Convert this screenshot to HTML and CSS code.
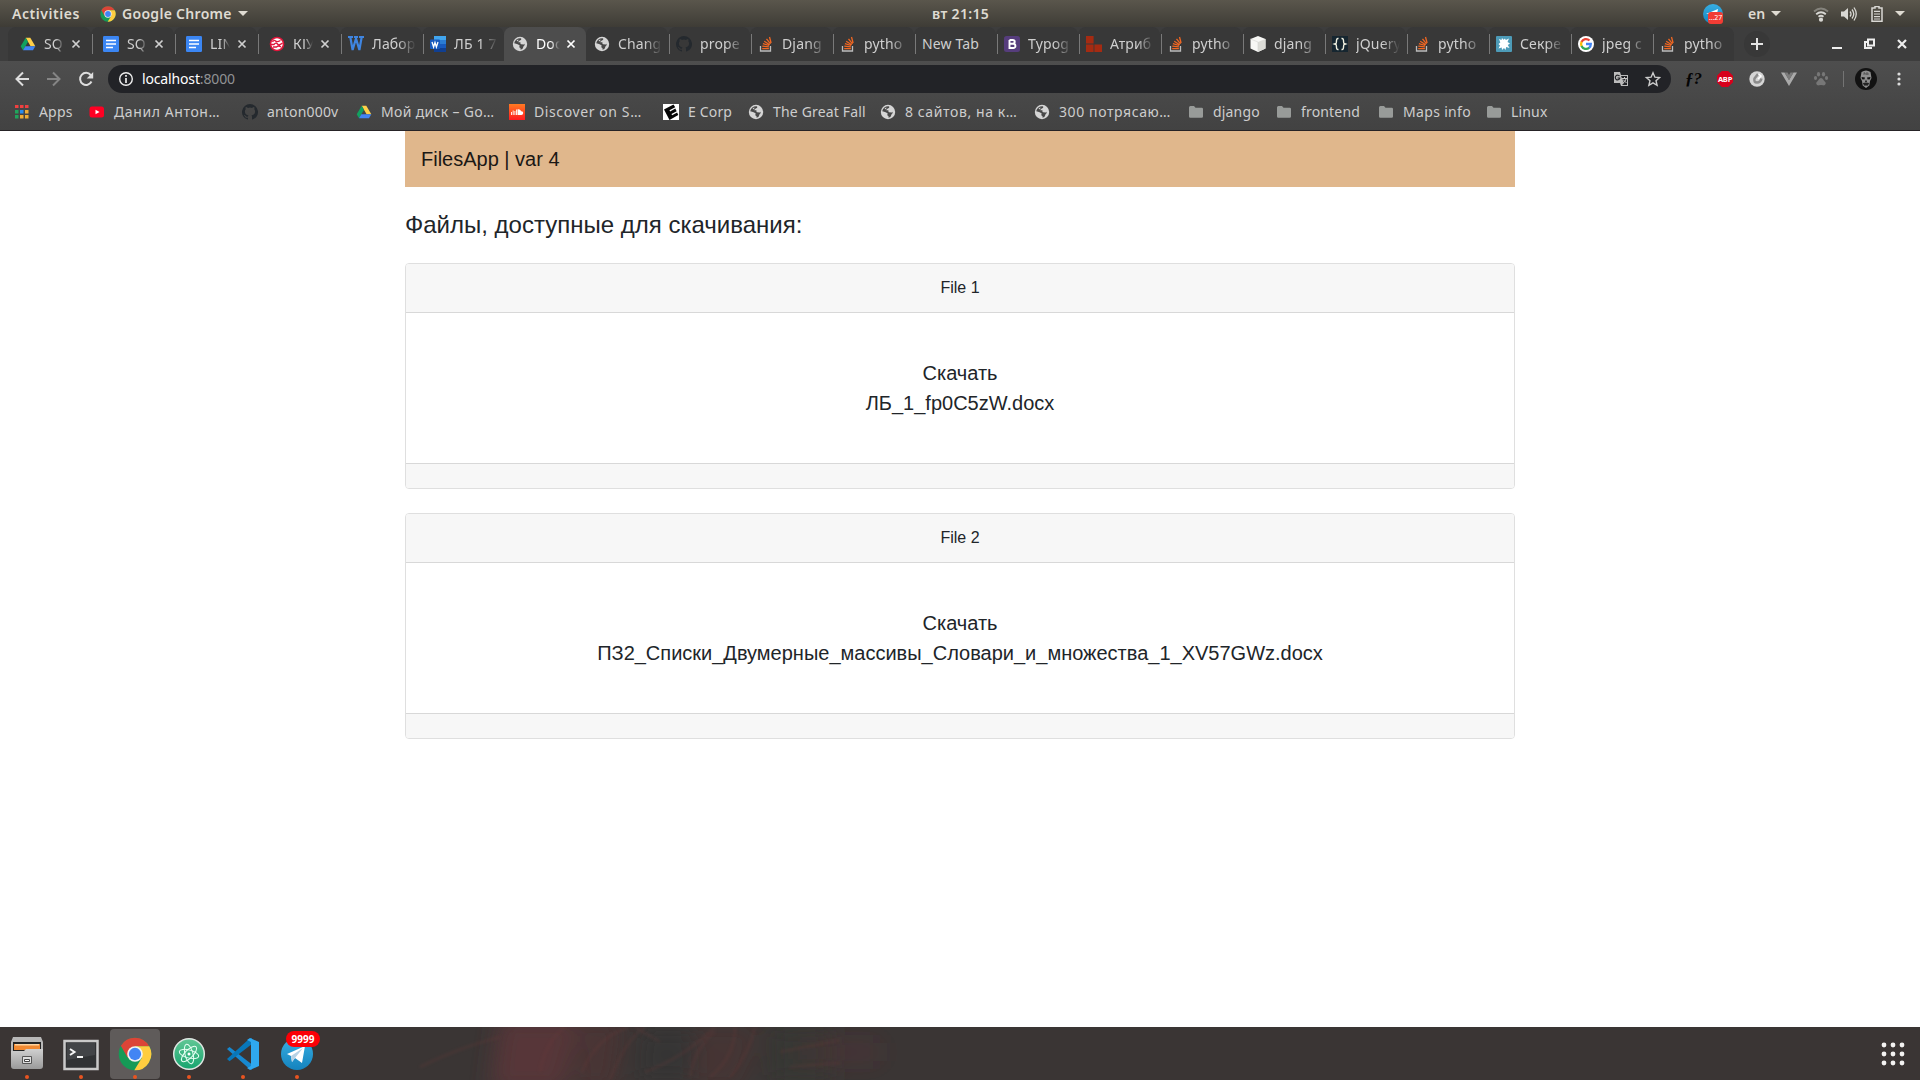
FILE: index.html
```
<!DOCTYPE html>
<html lang="ru">
<head>
<meta charset="utf-8">
<title>FilesApp</title>
<link rel="stylesheet" href="styles.css">
</head>
<body>
<svg class="defs" width="0" height="0" aria-hidden="true">
<defs>
<linearGradient id="metal" x1="0" y1="0" x2="0" y2="1"><stop offset="0" stop-color="#d0d0d0"/><stop offset="1" stop-color="#9a9a9a"/></linearGradient>
<linearGradient id="atomg" x1="0" y1="0" x2="0" y2="1"><stop offset="0" stop-color="#62c795"/><stop offset="1" stop-color="#16a56f"/></linearGradient>
<linearGradient id="tgg" x1="0" y1="0" x2="0" y2="1"><stop offset="0" stop-color="#37aee2"/><stop offset="1" stop-color="#1583be"/></linearGradient>
<linearGradient id="scg" x1="0" y1="0" x2="0" y2="1"><stop offset="0" stop-color="#ff7a22"/><stop offset="1" stop-color="#ff1a20"/></linearGradient>
<filter id="soft" x="-30%" y="-30%" width="160%" height="160%"><feGaussianBlur stdDeviation="11"/></filter>
<filter id="soft1"><feGaussianBlur stdDeviation="1.6"/></filter>
<symbol id="drive" viewBox="0 0 16 16"><path d="M5.7 1.8h4.6l5 8.500h-4.700z" fill="#ffcf48"/><path d="M5.700 1.800 8 5.800 3 14.300.7 10.300z" fill="#11a05f"/><path d="M5.300 10.300h10L13 14.300H3z" fill="#4285f4"/></symbol>
<symbol id="docs" viewBox="0 0 16 16"><rect width="16" height="16" rx="1.200" fill="#3b86f3"/><path d="M3 4.500h10M3 8h10M3 11.500h7" stroke="#fff" stroke-width="1.700"/></symbol>
<symbol id="kiu" viewBox="0 0 16 16"><circle cx="8" cy="8" r="6.500" fill="#fff" stroke="#e0153a" stroke-width="1.600"/><path d="M3.500 6q1.500-2.500 3-1t5-.5M2 8.500h3q2-2.500 3.500-.5t5-1M4 11h3.500q2-2 4.500 0" fill="none" stroke="#e0153a" stroke-width="1.300"/></symbol>
<symbol id="wblue" viewBox="0 0 16 16"><path d="M0 1h5M6 1h4M11 1h5M2.300 1 4.600 14 8 2.500 11.400 14 13.700 1" fill="none" stroke="#3f85e0" stroke-width="2.200"/></symbol>
<symbol id="word" viewBox="0 0 16 16"><path d="M4 0h12v4H4z" fill="#41a5ee"/><path d="M4 4h12v4H4z" fill="#2b7cd3"/><path d="M4 8h12v4H4z" fill="#185abd"/><path d="M4 12h12v4H4z" fill="#103f91"/><rect y="3.500" width="10" height="9.500" rx="1" fill="#185abd"/><path d="m2 6 1.600 5L5 6.500 6.400 11 8 6" fill="none" stroke="#fff" stroke-width="1.300"/></symbol>
<symbol id="globe" viewBox="0 0 16 16"><circle cx="8" cy="8" r="7.200" fill="#d5d5d5"/><path d="M8.500 2.200c1 .2 1 1.300.3 1.800L7 5l-.8 1.300H8l1.500 1.200H12c1 .8 1 2-.3 2.500l-.9 2.200c-.6 1-1.500 1.300-2.300 1.600.4-1.800-.3-2-1.200-2.600l.3-2L5 8 2.200 7.200A6 6 0 0 1 8.500 2.200z" fill="#484848"/><path d="M8.200 7.300 10.500 6l2.500.5-1 2-3-.2z" fill="#d5d5d5"/><path d="m4.500 4.300 2-.8-.5 2z" fill="#d5d5d5"/></symbol>
<symbol id="github" viewBox="0 0 16 16"><path fill="#24292e" d="M8 0a8 8 0 0 0-2.500 15.600c.4.1.5-.2.500-.4v-1.500c-2 .4-2.700-.5-2.900-1-.1-.3-.6-1-.9-1.200-.3-.2-.8-.6 0-.6.700 0 1.200.6 1.300.9.800 1.300 2 .9 2.500.7.100-.6.300-1 .6-1.200-1.900-.2-3.700-.9-3.700-4 0-.9.300-1.600.8-2.100-.1-.2-.4-1 .1-2.100 0 0 .7-.2 2.200.8a7.500 7.500 0 0 1 4 0c1.500-1 2.200-.8 2.200-.8.4 1.100.2 1.900.1 2.100.5.600.8 1.300.8 2.100 0 3.100-1.900 3.800-3.700 4 .3.300.6.800.6 1.500v2.400c0 .2.100.5.500.4A8 8 0 0 0 8 0z"/></symbol>
<symbol id="so" viewBox="0 0 16 16"><path d="M2.500 10v5h10v-5" fill="none" stroke="#bcbcbc" stroke-width="1.300"/><path d="M4.200 12.600h6.700M4.300 10.200l6.600.7M4.900 7.600l6.300 1.900M6.200 5.200l5.500 3.500M8.500 2.800l4 5.100M11.500 1l1.600 6" stroke="#f26722" stroke-width="1.300"/></symbol>
<symbol id="boot" viewBox="0 0 16 16"><rect width="16" height="16" rx="2.500" fill="#563d7c"/><path d="M5.500 4h3.200c2.700 0 2.700 3.600 0 3.800H5.500V4v8h3.600c3.200 0 3-4.200 0-4.200" fill="none" stroke="#fff" stroke-width="1.900"/></symbol>
<symbol id="bricks" viewBox="0 0 16 16"><path d="M0 0h7.600v7.600H0zM0 8.400h7.600V16H0zM8.400 8.400H16V16H8.400z" fill="#a52b12"/></symbol>
<symbol id="cube" viewBox="0 0 16 16"><path d="m8 0 7.500 3v9.500L8 16 .5 12.500V3z" fill="#f7f7f5"/><path d="m8 6 7.500-3v9.500L8 16z" fill="#dcdcd7"/><path d="m.5 3 7.500 3v10" fill="none" stroke="#d5d5d1" stroke-width=".6"/></symbol>
<symbol id="braces" viewBox="0 0 16 16"><path fill="#162630" d="M0 0h16v16H0z"/><path d="M6.500 2.500C3.500 2 5 6.500 4 7.500l-1.500.5 1.500.5c1 1-.5 5.500 2.500 5M9.500 2.500c3-.5 1.500 4 2.500 5l1.500.5-1.500.5c-1 1 .5 5.500-2.500 5" fill="none" stroke="#f0f0e0" stroke-width="1.400"/></symbol>
<symbol id="virus" viewBox="0 0 16 16"><rect width="16" height="16" rx="1" fill="#4d9bb8"/><path d="m3 3 2.500 1L6 2l1.500 1.800L9 2.500l.8 1.500L13 2.500 11.500 6l2.500 1.500L11.800 9l1.700 3-3.300-1-.7 3L8 12l-2 2-.3-2.500L2.500 12.500 4 9.500 2.500 8 4.300 6.500z" fill="#fff"/></symbol>
<symbol id="google" viewBox="0 0 16 16"><circle cx="8" cy="8" r="8" fill="#fff"/><g fill="none" stroke-width="2.300"><path d="M11.500 4.500A5 5 0 0 0 3.500 6" stroke="#ea4335"/><path d="M3.600 5.800a5 5 0 0 0 0 4.400" stroke="#fbbc05"/><path d="M3.500 10a5 5 0 0 0 7.800 1.700" stroke="#34a853"/><path d="M8 8h4.800q0 2.500-1.700 3.900" stroke="#4285f4"/></g></symbol>
<symbol id="chrome" viewBox="0 0 48 48"><circle cx="24" cy="24" r="23" fill="#159a56"/><path d="M4 12.500A23 23 0 0 1 44 13H24L13.500 29z" fill="#db4437"/><path d="M24 13h20.200A23 23 0 0 1 23 47l11-18z" fill="#ffcd40"/><circle cx="24" cy="24" r="11" fill="#f2f2f2"/><circle cx="24" cy="24" r="8.700" fill="#4285f4"/></symbol>
<symbol id="yt" viewBox="0 0 16 16"><rect x=".5" y="2.500" width="14.500" height="11" rx="2.500" fill="#ff0023"/><path d="m6.500 5.800 4 2.200-4 2.200z" fill="#fff"/></symbol>
<symbol id="sc" viewBox="0 0 16 16"><path fill="url(#scg)" d="M0 0h16v16H0z"/><path d="M2.500 8v3M4.200 6.500V11M5.900 7v4M7.500 5.500V11" stroke="#fff" stroke-width=".9"/><path d="M8.500 5.300c2-.6 3.300.6 3.500 2 3-.5 2.800 3.700.3 3.700H8.500z" fill="#fff"/></symbol>
<symbol id="ecorp" viewBox="0 0 16 16"><path fill="#fff" d="M0 0h16v16H0z"/><path d="M1 5.500 10.500.5l1.700 2.700-5.700 3 .6 1.200 5.200-2.800 1.400 2.600-5.200 2.800.6 1.200 5-2.700 1.200 2.500L6.500 16z" fill="#050505"/></symbol>
<symbol id="folder" viewBox="0 0 16 16"><path d="M1 3.500Q1 2 2.400 2H6l1.500 1.700h6.200Q15 3.700 15 5v7.500q0 1.300-1.300 1.300H2.300Q1 13.800 1 12.500z" fill="#989b99"/></symbol>
<symbol id="x" viewBox="0 0 10 10"><path d="m1.500 1.500 7 7M8.500 1.500l-7 7" stroke="currentColor" stroke-width="1.700"/></symbol>
</defs>
</svg>

<header class="topbar">
<span class="activities">Activities</span>
<span class="appmenu"><svg width="16" height="16"><use href="#chrome"/></svg><span>Google Chrome</span><i class="caret"></i></span>
<span class="clock">вт 21:15</span>
<span class="tray">
<span class="tg"><svg width="20" height="20" viewBox="0 0 20 20"><circle cx="10" cy="10" r="10" fill="url(#tgg)"/><path d="m3 10 12-5-1 5z" fill="#fff"/></svg><b>...27</b></span>
<span class="lang">en</span><i class="caret"></i>
<svg class="wifi" width="16" height="16" viewBox="0 0 16 16" fill="none" stroke="#d9d8d4" stroke-width="1.800"><path d="M1 5.500q7-6 14 0" stroke="#85837c"/><path d="M3.200 8.200q4.800-4 9.600 0M5.500 10.800q2.500-2 5 0"/><circle cx="8" cy="13.700" r="1.200" fill="#d9d8d4"/></svg>
<svg class="vol" width="16" height="16" viewBox="0 0 16 16"><path d="M0 5.500h3L7 2v12l-4-3.500H0z" fill="#d9d8d4"/><path d="M9 5.500q2 2.500 0 5M11 3.500q3.500 4.500 0 9M13 1.500q4.500 6.500 0 13" fill="none" stroke="#d9d8d4" stroke-width="1.300"/></svg>
<svg class="bat" width="12" height="16" viewBox="0 0 12 16"><path d="M4 .5h4V2h3v13.200H1V2h3z" fill="none" stroke="#d9d8d4" stroke-width="1.500"/><path d="M3 5.300h6M3 8h6M3 10.600h6M3 13h6" stroke="#d9d8d4" stroke-width="1.200"/></svg>
<i class="caret"></i>
</span>
</header>

<nav class="tabs">
<div class="tab wide first"><svg><use href="#drive"/></svg><span>SQ</span><svg class="close"><use href="#x"/></svg></div>
<div class="tab wide"><svg><use href="#docs"/></svg><span>SQ</span><svg class="close"><use href="#x"/></svg></div>
<div class="tab wide"><svg><use href="#docs"/></svg><span>LIN</span><svg class="close"><use href="#x"/></svg></div>
<div class="tab wide"><svg><use href="#kiu"/></svg><span>КІУ</span><svg class="close"><use href="#x"/></svg></div>
<div class="tab"><svg><use href="#wblue"/></svg><span>Лабор</span></div>
<div class="tab"><svg><use href="#word"/></svg><span>ЛБ 1 7</span></div>
<div class="tab active"><svg><use href="#globe"/></svg><span>Doc</span><svg class="close"><use href="#x"/></svg></div>
<div class="tab after"><svg><use href="#globe"/></svg><span>Chang</span></div>
<div class="tab"><svg><use href="#github"/></svg><span>prope</span></div>
<div class="tab"><svg><use href="#so"/></svg><span>Djang</span></div>
<div class="tab"><svg><use href="#so"/></svg><span>pytho</span></div>
<div class="tab plain"><span>New Tab</span></div>
<div class="tab"><svg><use href="#boot"/></svg><span>Typog</span></div>
<div class="tab"><svg><use href="#bricks"/></svg><span>Атриб</span></div>
<div class="tab"><svg><use href="#so"/></svg><span>pytho</span></div>
<div class="tab"><svg><use href="#cube"/></svg><span>djang</span></div>
<div class="tab"><svg><use href="#braces"/></svg><span>jQuery</span></div>
<div class="tab"><svg><use href="#so"/></svg><span>pytho</span></div>
<div class="tab"><svg><use href="#virus"/></svg><span>Секре</span></div>
<div class="tab"><svg><use href="#google"/></svg><span>jpeg c</span></div>
<div class="tab"><svg><use href="#so"/></svg><span>pytho</span></div>
<div class="newtab"><svg width="12" height="12" viewBox="0 0 12 12"><path d="M6 0v12M0 6h12" stroke="#e3e3e3" stroke-width="2"/></svg></div>
<svg class="winctl" width="76" height="14" viewBox="0 0 76 14" fill="none" stroke="#eee" stroke-width="2"><path d="M0 11h10"/><path d="M36 2.500h6v6h-6zM35 5h-2v6h6v-1"/><path d="m66 3 8 8M74 3l-8 8" stroke-width="2.200"/></svg>
</nav>

<section class="toolbar">
<div class="navrow">
<svg class="navicons" width="80" height="16" viewBox="0 0 80 16" fill="none" stroke-width="2"><path d="M14 8H2M8 1.500 1.500 8 8 14.500" stroke="#dedede"/><path d="M32 8h12M38 1.500 44.500 8l-6.500 6.500" stroke="#858585"/><path d="M76.500 10.500a6 6 0 1 1-.8-6.500" stroke="#dedede"/><path d="M78.200 1v6.500h-6.500z" fill="#dedede"/></svg>
<div class="omnibox">
<svg width="16" height="16" viewBox="0 0 16 16"><circle cx="8" cy="8" r="6.300" fill="none" stroke="#eee" stroke-width="1.400"/><path d="M8 7v5M8 4v1.700" stroke="#eee" stroke-width="1.700"/></svg>
<span class="url">localhost<em>:8000</em></span>
<svg class="omr" width="48" height="16" viewBox="0 0 48 16"><path d="M1 1h6l1 3h7v11H8l-1-3H1z" fill="#bcbcbc"/><path d="M8 5h6v9H9l2-2z" fill="#222327"/><path d="M9 7.500h5M11.500 6v1.500M9.500 12q3-1 3.500-4M10 8.500l3.500 3.500" stroke="#c5c5c5"/><path d="M6.500 5.200A2.300 2.300 0 1 0 6.700 7.500V7H4.500" fill="none" stroke="#222327" stroke-width="1.200"/><path d="m40 1.800 1.900 4.400 4.700.4-3.600 3.100 1.100 4.600L40 11.800l-4.100 2.500L37 9.700l-3.600-3.100 4.700-.4z" fill="none" stroke="#ccc" stroke-width="1.400"/></svg>
</div>
<div class="exts">
<span class="fq">ƒ?</span>
<span class="abp"><b>ABP</b></span>
<svg width="16" height="16" viewBox="0 0 16 16"><circle cx="8" cy="8" r="7.700" fill="#d5d5d5"/><path d="M9 3 5.500 7.500q-1 4 2.500 4 3.500 0 4.500-4" fill="none" stroke="#8c8c8c" stroke-width="2.500"/><path d="m9.500 3 2.500 2-3 3" fill="none" stroke="#fff" stroke-width="1.500"/></svg>
<svg width="16" height="16" viewBox="0 0 16 16"><path d="M0 1.500h3.500L8 9l4.500-7.500H16L8 15z" fill="#aaa"/><path d="M3.500 1.500h3L8 4l1.500-2.500h3L8 9.300z" fill="#7b7b7b"/></svg>
<svg width="16" height="16" viewBox="0 0 16 16" fill="#777"><ellipse cx="5.500" cy="3.200" rx="1.600" ry="2.300"/><ellipse cx="10.500" cy="3.200" rx="1.600" ry="2.300"/><ellipse cx="2.500" cy="7" rx="1.600" ry="2"/><ellipse cx="13.500" cy="7" rx="1.600" ry="2"/><path d="M8 7c2 0 2.500 2.500 4 3.800 1.800 1.700 0 4.200-2 3.500q-2-.7-4 0c-2 .7-3.800-1.800-2-3.500C5.500 9.500 6 7 8 7z"/></svg>
</div>
<i class="vsep"></i>
<svg class="avatar" width="22" height="22" viewBox="0 0 22 22"><circle cx="11" cy="11" r="11" fill="#121212"/><path d="M6.500 4q4.500-3 9 0l1 6-1.500 3-.7 4.500L11 20l-3.300-2.500L7 13l-1.500-3z" fill="#8f8f8f"/><path d="m6.500 9 3.500.6-.6 2-2.400-.3zM15.500 9l-3.500.6.6 2 2.400-.3zM11 11.500l1 2.500h-2zM8 15l3-.6 3 .6-1 2.500H9z" fill="#151515"/><path d="M9 16h4M8 6h6M9 4l1 2M12 4v3" stroke="#444" stroke-width=".7"/></svg>
<svg class="kebab" width="4" height="14" viewBox="0 0 4 14" fill="#dcdcdc"><circle cx="2" cy="2" r="1.600"/><circle cx="2" cy="7" r="1.600"/><circle cx="2" cy="12" r="1.600"/></svg>
</div>
<div class="bookmarks">
<a><svg viewBox="0 0 16 16"><path d="M1 1h3.500v3H1zM6 1h3.500v3H6zM11 1h3.500v3H11z" fill="#f04040"/><path d="M1 6h3.500v3.500H1zM1 11h3.500v3.500H1z" fill="#20a45c"/><path d="M6 6h3.500v3.500H6z" fill="#278df0"/><path d="M11 6h3.500v3.500H11zM6 11h3.500v3.500H6zM11 11h3.500v3.500H11z" fill="#f0ad35"/></svg><span>Apps</span></a>
<a class="long"><svg><use href="#yt"/></svg><span>Данил Антон…</span></a>
<a><svg><use href="#github"/></svg><span>anton000v</span></a>
<a class="mid"><svg><use href="#drive"/></svg><span>Мой диск – Go…</span></a>
<a class="long"><svg><use href="#sc"/></svg><span>Discover on S…</span></a>
<a><svg><use href="#ecorp"/></svg><span>E Corp</span></a>
<a><svg><use href="#globe"/></svg><span>The Great Fall</span></a>
<a class="long"><svg><use href="#globe"/></svg><span>8 сайтов, на к…</span></a>
<a class="long"><svg><use href="#globe"/></svg><span>300 потрясаю…</span></a>
<a><svg><use href="#folder"/></svg><span>django</span></a>
<a><svg><use href="#folder"/></svg><span>frontend</span></a>
<a class="mid"><svg><use href="#folder"/></svg><span>Maps info</span></a>
<a><svg><use href="#folder"/></svg><span>Linux</span></a>
</div>
</section>

<main class="page">
<div class="container">
<div class="navbar">FilesApp | var 4</div>
<h1>Файлы, доступные для скачивания:</h1>
<article class="card">
<div class="card-header">File 1</div>
<div class="card-body"><p>Скачать</p><p>ЛБ_1_fp0C5zW.docx</p></div>
<div class="card-footer"></div>
</article>
<article class="card">
<div class="card-header">File 2</div>
<div class="card-body"><p>Скачать</p><p>ПЗ2_Списки_Двумерные_массивы_Словари_и_множества_1_XV57GWz.docx</p></div>
<div class="card-footer"></div>
</article>
</div>
</main>

<footer class="dock">
<svg class="wall" width="1920" height="53" viewBox="0 0 1920 53"><g filter="url(#soft)"><path d="M500-10h80l-15 75h-75z" fill="#5c3538" opacity=".85"/><path d="M580-10h45l-10 75h-40z" fill="#4d3536" opacity=".8"/><path d="M640 0h55v55h-60z" fill="#343532" opacity=".8"/><path d="M700 0h60l-20 60h-50z" fill="#5a3535" opacity=".35"/><path d="M770 0h60v55h-60z" fill="#343532" opacity=".6"/><path d="M800 15h80v20h-80z" fill="#6b3539" opacity=".25"/></g><g fill="none" stroke="#6d3a39" opacity=".32" filter="url(#soft1)" stroke-width="2"><path d="M420 40q40-20 80-30M540 45q5-30 25-45M582 45q15-35 45-44M610 53q15-40 35-53M645 45q40-15 70-45M690 50q5-30 25-45M710 50q25-20 25-50M730 50q20-25 25-50M635 0l25 15M780 25l60-12M790 40l50-4"/></g></svg>
<div class="launcher"><svg viewBox="0 0 50 50"><path d="M11 8h28l2 5v9H9v-9z" fill="#b8b8b8"/><path d="M11 13h28v9H11z" fill="#242424"/><path d="M12 15h26v6H12z" fill="#f28a32"/><path d="M13 15h24v1.500H13z" fill="#ffd4a0"/><path d="M9 22h13l2-2h17v17q0 3-3 3H12q-3 0-3-3z" fill="url(#metal)"/><path d="M20.500 27.500h9v7h-9z" fill="#ddd" stroke="#555"/><path d="M22.500 30.500h5v2h-5z" fill="#fff" stroke="#444"/></svg><i></i></div>
<div class="launcher"><svg viewBox="0 0 50 50"><path d="M8.500 12h33v28h-33z" fill="#303234" stroke="#c9c9c9" stroke-width="2.500"/><path d="M11 14h28v12L11 31z" fill="#424447"/><path d="m14 20 4.500 3-4.500 3M21 28h6" fill="none" stroke="#f5f5f5" stroke-width="2"/></svg><i></i></div>
<div class="launcher on"><svg viewBox="0 0 50 50"><use href="#chrome" x="8" y="8" width="34" height="34"/></svg><i></i></div>
<div class="launcher"><svg viewBox="0 0 50 50"><circle cx="25" cy="25" r="15.300" fill="url(#atomg)" stroke="#dfe5e2" stroke-width="1.500"/><g fill="none" stroke="#e9fff4" stroke-width="1"><ellipse cx="25" cy="25" rx="10" ry="4" transform="rotate(15 25 25)"/><ellipse cx="25" cy="25" rx="10" ry="4" transform="rotate(75 25 25)"/><ellipse cx="25" cy="25" rx="10" ry="4" transform="rotate(135 25 25)"/></g><circle cx="25" cy="25" r="1.500" fill="#fff"/></svg><i></i></div>
<div class="launcher"><svg viewBox="0 0 50 50"><path d="m9 20 2.500-2L34 35.500v5L31.500 40z" fill="#1789d1"/><path d="m9 30 2.500 2.300L34 15v-6l-3 1z" fill="#0877b9"/><path d="m32 9 9 4v24l-9 4-3-2 4-2V13l-4-2z" fill="#2fa8ef"/></svg><i></i></div>
<div class="launcher"><svg viewBox="0 0 50 50"><circle cx="25" cy="25" r="16" fill="url(#tgg)"/><path d="m15 25 18-8-3 17-7-5-3 4-1-6z" fill="#fff"/><path d="m19 27 12-8-8 10-3 4z" fill="#b7d2e5"/></svg><b>9999</b><i></i></div>
<svg class="grid" width="24" height="24" viewBox="0 0 24 24" fill="#f3f3f2"><circle cx="3" cy="3" r="2.400"/><circle cx="12" cy="3" r="2.400"/><circle cx="21" cy="3" r="2.400"/><circle cx="3" cy="12" r="2.400"/><circle cx="12" cy="12" r="2.400"/><circle cx="21" cy="12" r="2.400"/><circle cx="3" cy="21" r="2.400"/><circle cx="12" cy="21" r="2.400"/><circle cx="21" cy="21" r="2.400"/></svg>
</footer>
</body>
</html>
```
FILE: styles.css
```
* { box-sizing: border-box; }
body { margin: 0; width: 1920px; height: 1080px; overflow: hidden; display: flex; flex-direction: column; background: #fff; font-family: "Noto Sans", "Open Sans", sans-serif; }
svg { display: block; flex: none; }
.defs { position: absolute; }

.topbar { height: 27px; flex: none; display: grid; grid-template-columns: 88px 832px 714px 1fr; align-items: center; padding-left: 12px; background: linear-gradient(#5a564c, #3e3c36); color: #dfdbd2; font-size: 14px; font-weight: 600; line-height: 26px; white-space: nowrap; }
.appmenu { display: flex; align-items: center; gap: 6px; }
.activities { letter-spacing: .55px; }
.appmenu span { width: 110px; letter-spacing: .3px; }
.clock { letter-spacing: .35px; }
.caret { flex: none; border: 5px solid transparent; border-top-color: #dfdbd2; border-bottom: 0; }
.tray { display: flex; align-items: center; padding-left: 57px; }
.tg { position: relative; width: 20px; height: 20px; margin-right: 25px; }
.tg b { position: absolute; left: 5px; top: 8px; width: 15px; height: 12px; border-radius: 3px; background: #f23c34; color: #fff; font-size: 7px; font-weight: 400; line-height: 12px; text-align: center; }
.lang { width: 23px; }
.wifi { margin-left: 32px; }
.vol { margin-left: 12px; }
.bat { margin-left: 14px; margin-right: 12px; }

.tabs { height: 34px; flex: none; display: flex; align-items: stretch; padding-left: 8px; background: #3d3d3d; color: #cfcfcf; }
.tab { position: relative; width: 82px; flex: none; display: flex; align-items: center; gap: 8px; padding-left: 8px; background: #383838; border-radius: 8px 8px 0 0; }
.tab::before { content: ""; position: absolute; left: 1px; top: 7px; width: 1px; height: 20px; background: #797979; }
.tab.first::before, .tab.active::before, .tab.after::before { display: none; }
.tab svg { width: 16px; height: 16px; }
.tab span { width: 44px; overflow: hidden; white-space: nowrap; font-size: 14px; line-height: 24px; letter-spacing: .15px; -webkit-mask-image: linear-gradient(90deg, #000 60%, transparent); mask-image: linear-gradient(90deg, #000 60%, transparent); }
.tab.wide { width: 83px; padding-left: 12px; }
.tab.wide span { width: 20px; }
.tab svg.close { width: 10px; height: 10px; margin-left: -1px; }
.tab.active { background: #4d4d4d; color: #fff; }
.tab.active span { width: 24px; }
.tab.active svg.close { margin-left: -2px; }
.tab.plain span { width: 66px; -webkit-mask-image: none; mask-image: none; }
.newtab { width: 26px; height: 26px; margin: 4px 0 0 10px; border-radius: 50%; background: #383838; display: flex; align-items: center; justify-content: center; }
.winctl { margin: 10px 12px 0 auto; }

.toolbar { height: 70px; flex: none; background: linear-gradient(#4e4e4e, #424242); border-bottom: 1px solid #262326; padding-top: 4px; }
.navrow { height: 28px; display: flex; align-items: center; padding-left: 15px; }
.omnibox { width: 1563px; height: 28px; margin-left: 13px; border-radius: 14px; background: #222327; display: flex; align-items: center; padding: 0 10px; gap: 8px; }
.url { color: #fff; font-size: 14px; letter-spacing: -.15px; line-height: 24px; }
.url em { font-style: normal; color: #909294; }
.omr { margin-left: auto; }
.exts { display: flex; align-items: center; gap: 16px; margin-left: 14px; }
.fq { width: 16px; font: italic bold 17px/20px "Liberation Serif", serif; color: #050505; white-space: nowrap; }
.abp { width: 16px; height: 16px; background: #d7001b; clip-path: polygon(30% 0, 70% 0, 100% 30%, 100% 70%, 70% 100%, 30% 100%, 0 70%, 0 30%); }
.abp b { display: block; font: bold 7.5px/16px "Noto Sans", sans-serif; letter-spacing: -.2px; color: #fff; text-align: center; }
.vsep { width: 1px; height: 16px; background: #747474; margin-left: 14px; }
.avatar { margin-left: 11px; }
.kebab { margin-left: 20px; }
.bookmarks { height: 37px; display: grid; grid-template-columns: 75px 153px 114px 153px 154px 85px 132px 154px 154px 88px 102px 108px 90px; align-items: center; padding-left: 14px; color: #cdcdcd; font-size: 14px; line-height: 24px; letter-spacing: .17px; }
.bookmarks a { display: flex; align-items: center; gap: 9px; white-space: nowrap; }
.bookmarks .mid { letter-spacing: .33px; }
.bookmarks .long { letter-spacing: .6px; }
.bookmarks svg { width: 16px; height: 16px; }

.page { height: 896px; flex: none; font-family: "Liberation Sans", Arial, sans-serif; color: #212529; }
.container { width: 1110px; margin: 0 auto; }
.navbar { height: 56px; padding: 13px 16px; background: #e0b78c; color: #1b1815; font-size: 20px; line-height: 30px; }
h1 { margin: 24px 0; font-size: 24px; line-height: 28px; font-weight: 400; }
.card { margin-bottom: 24px; border: 1px solid #dfdfdf; border-radius: 4px; overflow: hidden; text-align: center; }
.card-header { height: 49px; padding: 12px; background: #f7f7f7; border-bottom: 1px solid #d8d8d8; font-size: 16px; line-height: 24px; }
.card-body { height: 150px; padding-top: 45px; font-size: 20px; line-height: 30px; }
.card-body p { margin: 0; }
.card-footer { height: 25px; background: #f7f7f7; border-top: 1px solid #d8d8d8; }

.dock { position: relative; height: 53px; flex: none; display: flex; align-items: flex-start; gap: 4px; padding: 2px 15px 0 2px; background: #3a3534; overflow: hidden; }
.wall { position: absolute; left: 0; top: 0; }
.launcher { position: relative; width: 50px; height: 50px; border-radius: 4px; }
.launcher.on { background: #5f5b5a; }
.launcher svg { width: 50px; height: 50px; }
.launcher i { position: absolute; left: 23px; top: 46px; width: 4px; height: 4px; border-radius: 50%; background: #e95420; }
.launcher b { position: absolute; left: 14px; top: 2px; width: 34px; height: 16px; border-radius: 8px; background: #fb0007; color: #fff; font-size: 10px; line-height: 16px; text-align: center; }
.grid { position: relative; margin: 13px 0 0 auto; }
```
